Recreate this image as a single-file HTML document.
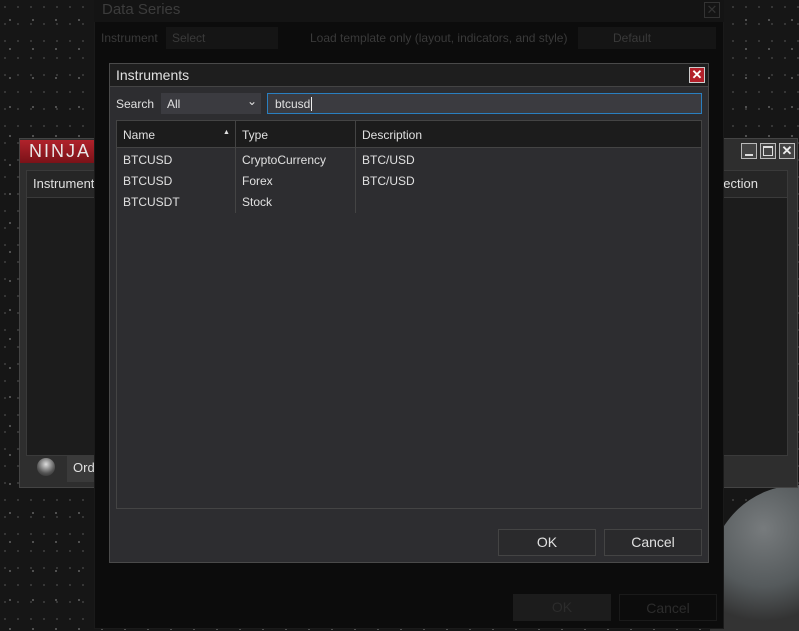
<!DOCTYPE html>
<html style="overflow:hidden"><head><meta charset="utf-8"><style>
*{margin:0;padding:0;box-sizing:border-box}
html,body{width:799px;height:631px;overflow:hidden}
body{position:relative;font-family:"Liberation Sans",sans-serif;font-size:12px;color:#e0e0e0;
background:radial-gradient(circle at 30px 60px,#aaa 0 0.8px,transparent 1.3px) 0 0/47px 53px,radial-gradient(circle at 10px 20px,#666 0 0.7px,transparent 1.2px) 0 0/23px 29px,radial-gradient(circle at 5px 7px,#555 0 0.6px,transparent 1px) 0 0/13px 17px,#161616;}
.abs{position:absolute}
</style></head><body>
<!-- moon -->
<div class="abs" style="left:710px;top:485px;width:89px;height:146px;border-radius:90px 0 0 0;background:radial-gradient(circle at 60% 30%,#777b7d,#555a5c 50%,#333 80%)"></div>
<!-- Ninja window -->
<div class="abs" style="left:19px;top:138px;width:779px;height:350px;background:#2e2e2e;border:1px solid #444"></div>
<div class="abs" style="left:20px;top:140px;width:80px;height:23px;background:linear-gradient(#b0222b,#7a1218);color:#e8e8e8;font-size:18px;letter-spacing:2px;padding:1px 0 0 9px">NINJA</div>
<div class="abs" style="left:26px;top:170px;width:762px;height:286px;background:#1c1c1c;border:1px solid #3a3a3a"></div>
<div class="abs" style="left:27px;top:171px;width:760px;height:27px;background:#262626;border-bottom:1px solid #3a3a3a;font-size:13px;padding:5px 6px">Instrument</div>
<div class="abs" style="left:716px;top:176px;font-size:13px">nection</div>
<div class="abs" style="left:37px;top:458px;width:18px;height:18px;border-radius:50%;background:radial-gradient(circle at 50% 35%,#ddd,#555 60%,#222)"></div>
<div class="abs" style="left:67px;top:455px;width:40px;height:27px;background:#3a3a3a;font-size:13px;padding:5px 6px">Ord</div>
<div class="abs" style="left:741px;top:143px;width:16px;height:16px;border:1px solid #bbb;background:#444"><div style="margin:10px 3px 0;height:2px;background:#ddd"></div></div>
<div class="abs" style="left:760px;top:143px;width:16px;height:16px;border:1px solid #bbb;background:#444"><div style="margin:2px;height:10px;border:1px solid #ddd;border-top-width:2px"></div></div>
<div class="abs" style="left:779px;top:143px;width:16px;height:16px;border:1px solid #bbb;background:#444;color:#eee;font-weight:bold;font-size:13px;text-align:center;line-height:14px">✕</div>
<!-- Data series -->
<div class="abs" style="left:94px;top:0;width:630px;height:629px;background:#0c0c0c;border:1px solid #1a1a1a"></div>
<div class="abs" style="left:94px;top:0;width:630px;height:22px;background:#141414;color:#3c3c3c;font-size:15px;padding:1px 8px">Data Series</div>
<div class="abs" style="left:704px;top:2px;width:16px;height:16px;border:1px solid #333;color:#333;text-align:center;font-size:13px;line-height:14px">✕</div>
<div class="abs" style="left:101px;top:31px;color:#3a3a3a;font-size:12px">Instrument</div>
<div class="abs" style="left:166px;top:27px;width:112px;height:22px;background:#151515;color:#3a3a3a;font-size:12px;padding:4px 6px">Select</div>
<div class="abs" style="left:310px;top:31px;color:#3a3a3a;font-size:12px">Load template only (layout, indicators, and style)</div>
<div class="abs" style="left:578px;top:27px;width:138px;height:22px;background:#151515;color:#3a3a3a;font-size:12px;padding:4px 35px">Default</div>
<div class="abs" style="left:513px;top:594px;width:98px;height:27px;background:#1c1c1c;color:#2c2c2c;text-align:center;font-size:14px;line-height:27px">OK</div>
<div class="abs" style="left:619px;top:594px;width:98px;height:27px;border:1px solid #1a1a1a;color:#2c2c2c;text-align:center;font-size:14px;line-height:26px">Cancel</div>
<!-- Instruments -->
<div class="abs" style="left:109px;top:63px;width:600px;height:500px;background:#2d2d30;border:1px solid #4a4a4a"></div>
<div class="abs" style="left:110px;top:64px;width:598px;height:23px;background:#1e1e1e;border-bottom:1px solid #444;font-size:14px;padding:3px 6px">Instruments</div>
<div class="abs" style="left:689px;top:67px;width:16px;height:16px;background:#b3202a;border:1px solid #ccc;color:#fff;font-weight:bold;font-size:13px;text-align:center;line-height:14px">✕</div>
<div class="abs" style="left:116px;top:97px;font-size:12px">Search</div>
<div class="abs" style="left:161px;top:93px;width:100px;height:21px;background:#3b3b40;font-size:12px;padding:4px 6px">All<span style="position:absolute;right:4px;top:1px;font-size:12px">&#8964;</span></div>
<div class="abs" style="left:267px;top:93px;width:435px;height:21px;background:#3b3b40;border:1px solid #2a7fc0;font-size:12px;padding:3px 7px">btcusd<span style="border-left:1px solid #eee;margin-left:1px"></span></div>
<div class="abs" style="left:116px;top:120px;width:586px;height:389px;background:#2d2d30;border:1px solid #444"></div>
<div class="abs" style="left:117px;top:121px;width:584px;height:27px;background:#1c1c1c;border-bottom:1px solid #444"></div>
<div class="abs" style="left:235px;top:121px;width:1px;height:92px;background:#444"></div>
<div class="abs" style="left:355px;top:121px;width:1px;height:92px;background:#444"></div>
<div class="abs" style="left:123px;top:128px;font-size:12px">Name</div>
<div class="abs" style="left:223px;top:129px;font-size:7px">▲</div>
<div class="abs" style="left:242px;top:128px;font-size:12px">Type</div>
<div class="abs" style="left:362px;top:128px;font-size:12px">Description</div>
<div class="abs" style="left:123px;top:150px;font-size:12px;line-height:21px">BTCUSD<br>BTCUSD<br>BTCUSDT</div>
<div class="abs" style="left:242px;top:150px;font-size:12px;line-height:21px">CryptoCurrency<br>Forex<br>Stock</div>
<div class="abs" style="left:362px;top:150px;font-size:12px;line-height:21px">BTC/USD<br>BTC/USD</div>
<div class="abs" style="left:498px;top:529px;width:98px;height:27px;border:1px solid #444;background:#2a2a2c;text-align:center;font-size:14px;line-height:25px">OK</div>
<div class="abs" style="left:604px;top:529px;width:98px;height:27px;border:1px solid #444;background:#2a2a2c;text-align:center;font-size:14px;line-height:25px">Cancel</div>
</body></html>
